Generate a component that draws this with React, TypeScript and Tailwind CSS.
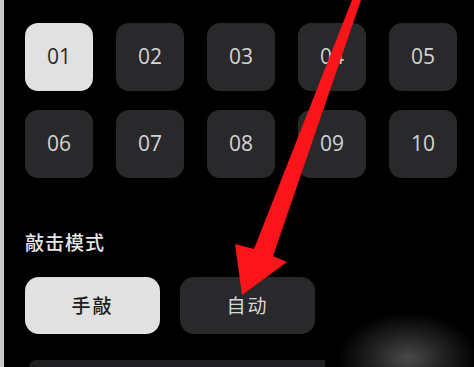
import React from "react";

const nums = ["01", "02", "03", "04", "05", "06", "07", "08", "09", "10"];

export default function App() {
  const selected = "01";
  const mode = "手敲";

  return (
    <div className="relative w-[474px] h-[367px] overflow-hidden bg-black flex">
      {/* left edge strip */}
      <div className="w-[4px] shrink-0 bg-[#c9c9c9]" />

      <div className="flex-1 flex flex-col pl-[21px] pt-[23px] bg-[radial-gradient(ellipse_70px_45px_at_404px_358px,#4a4a4a_0%,#262626_45%,#000_100%)]">
        <div className="grid grid-cols-[repeat(5,68px)] gap-x-[23px] gap-y-[19px] font-['Open_Sans',sans-serif]">
          {nums.map((n) => (
            <div
              key={n}
              className={`h-[68px] rounded-[13px] flex items-center justify-center text-[21px] ${
                n === selected ? "bg-[#e1e1e1] text-[#2a2a2a]" : "bg-[#29292b] text-[#d4d4d4]"
              }`}
            >
              {n}
            </div>
          ))}
        </div>

        <div className="mt-[50px] text-[19px] leading-[28px] font-medium text-[#e6e6e6] tracking-[1px] font-['Noto_Sans_CJK_SC',sans-serif]">
          敲击模式
        </div>

        <div className="mt-[21px] flex gap-[20px] font-['Noto_Sans_CJK_SC',sans-serif]">
          {["手敲", "自动"].map((m) => (
            <div
              key={m}
              className={`w-[135px] h-[57px] rounded-[14px] flex items-center justify-center text-[19px] tracking-[2px] ${
                m === mode ? "bg-[#e1e1e1] text-[#1c1c1c] font-medium" : "bg-[#29292b] text-[#d8d8d8]"
              }`}
            >
              {m}
            </div>
          ))}
        </div>

        <div className="mt-[26px] ml-[4px] w-[296px] h-[20px] rounded-tl-[12px] bg-[#1f1f21]" />
      </div>

      {/* red annotation arrow */}
      <svg className="absolute left-0 top-0 pointer-events-none" width="474" height="367" viewBox="0 0 474 367">
        <polygon
          points="352,0 361,0 273,256 287,262 242,295 235,244 254,249"
          fill="#fb1419"
        />
      </svg>
    </div>
  );
}
